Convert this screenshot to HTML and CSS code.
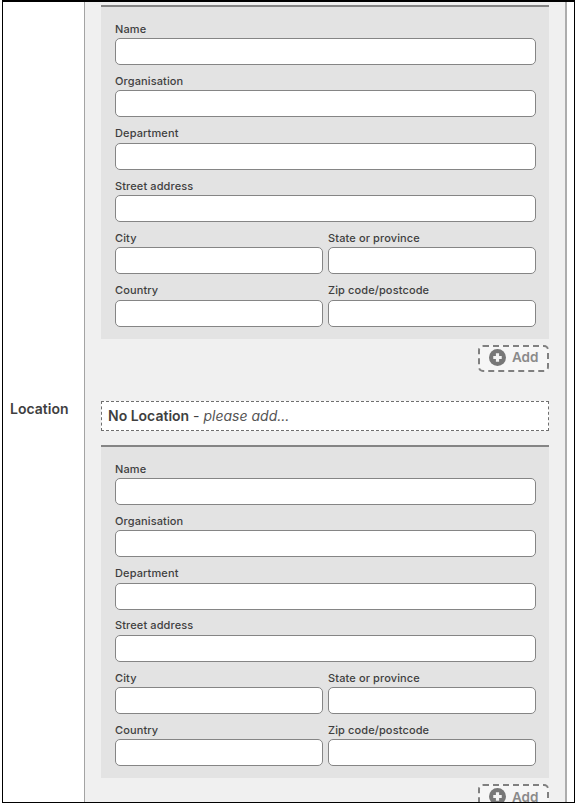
FILE: index.html
```html
<!DOCTYPE html>
<html lang="en">
<head>
  <meta charset="UTF-8" />
  <title>Location</title>
  <link rel="stylesheet" href="styles.css">
</head>
<body>

  <div class="frame">
    <div class="row-label">Location</div>

    <div class="row-content">
      <div class="panel">
        <div class="field field-wide"><label>Name</label><input type="text"></div>
        <div class="field field-wide"><label>Organisation</label><input type="text"></div>
        <div class="field field-wide"><label>Department</label><input type="text"></div>
        <div class="field field-wide"><label>Street address</label><input type="text"></div>
        <div class="field"><label>City</label><input type="text"></div>
        <div class="field"><label>State or province</label><input type="text"></div>
        <div class="field"><label>Country</label><input type="text"></div>
        <div class="field"><label>Zip code/postcode</label><input type="text"></div>
      </div>
      <div class="add-row">
        <button class="add-btn" type="button">
          <svg class="add-icon" viewBox="0 0 16 16"><circle cx="8" cy="8" r="8" fill="#777"/><path d="M8 4v8M4 8h8" stroke="#f4f4f4" stroke-width="3"/></svg>
          Add
        </button>
      </div>

      <div class="empty-note"><b>No Location</b> - <i>please add...</i></div>

      <div class="panel">
        <div class="field field-wide"><label>Name</label><input type="text"></div>
        <div class="field field-wide"><label>Organisation</label><input type="text"></div>
        <div class="field field-wide"><label>Department</label><input type="text"></div>
        <div class="field field-wide"><label>Street address</label><input type="text"></div>
        <div class="field"><label>City</label><input type="text"></div>
        <div class="field"><label>State or province</label><input type="text"></div>
        <div class="field"><label>Country</label><input type="text"></div>
        <div class="field"><label>Zip code/postcode</label><input type="text"></div>
      </div>
      <div class="add-row">
        <button class="add-btn" type="button">
          <svg class="add-icon" viewBox="0 0 16 16"><circle cx="8" cy="8" r="8" fill="#777"/><path d="M8 4v8M4 8h8" stroke="#f4f4f4" stroke-width="3"/></svg>
          Add
        </button>
      </div>
    </div>
  </div>

</body>
</html>
```

FILE: styles.css
```css
html, body {
  height: 100%;
  overflow: hidden;
}

body {
  margin: 0;
  padding: 0 0 0 2px;
  background: #fff;
  font-family: Inter, 'Liberation Sans', sans-serif;
  color: #3f3f3f;
}

.frame {
  display: flex;
  box-sizing: border-box;
  width: 573px;
  height: 803px;
  border: 1px solid #000;
  border-width: 2px 1px 1px 1px;
  overflow: hidden;
}

.row-label {
  width: 81px;
  padding: 399px 0 0 7px;
  box-sizing: border-box;
  font-size: 14px;
  font-weight: 600;
  line-height: 16px;
}

.row-content {
  width: 483px;
  box-sizing: border-box;
  padding: 3px 16px 0 16px;
  background: #f0f0f0;
  border-left: 1px solid #a3a3a3;
  border-right: 2px solid #adadad;
}

.panel {
  display: grid;
  grid-template-columns: 208px 208px;
  column-gap: 5px;
  row-gap: 8.93px;
  padding: 14.6px 12px 12px 14px;
  background: #e3e3e3;
  border-top: 2px solid #858585;
}

.field-wide {
  grid-column: 1 / 3;
}

.field label {
  display: block;
  margin-bottom: 2.4px;
  font-size: 11px;
  font-weight: 500;
  letter-spacing: 0.12px;
  line-height: 14px;
}

.field input {
  display: block;
  box-sizing: border-box;
  width: 100%;
  height: 27px;
  margin: 0;
  background: #fff;
  border: 1px solid #858585;
  border-radius: 5px;
}

.add-row {
  display: flex;
  justify-content: flex-end;
  margin-top: 6px;
}

.add-btn {
  display: flex;
  align-items: center;
  gap: 6px;
  box-sizing: border-box;
  width: 71px;
  height: 27px;
  padding: 0 0 2px 9px;
  background: #f6f6f6;
  border: 2px dashed #808080;
  border-radius: 5px;
  color: #8a8a8a;
  font-family: inherit;
  font-size: 13.5px;
  font-weight: 600;
}

.add-icon {
  width: 17px;
  height: 17px;
}

.empty-note {
  box-sizing: border-box;
  height: 30px;
  margin: 29px 0 14.4px;
  padding: 0 6px;
  background: #fff;
  border: 1px dashed #6f6f6f;
  font-size: 14px;
  line-height: 27px;
}

.empty-note b {
  font-weight: 600;
}

.empty-note i {
  color: #555;
}
```
